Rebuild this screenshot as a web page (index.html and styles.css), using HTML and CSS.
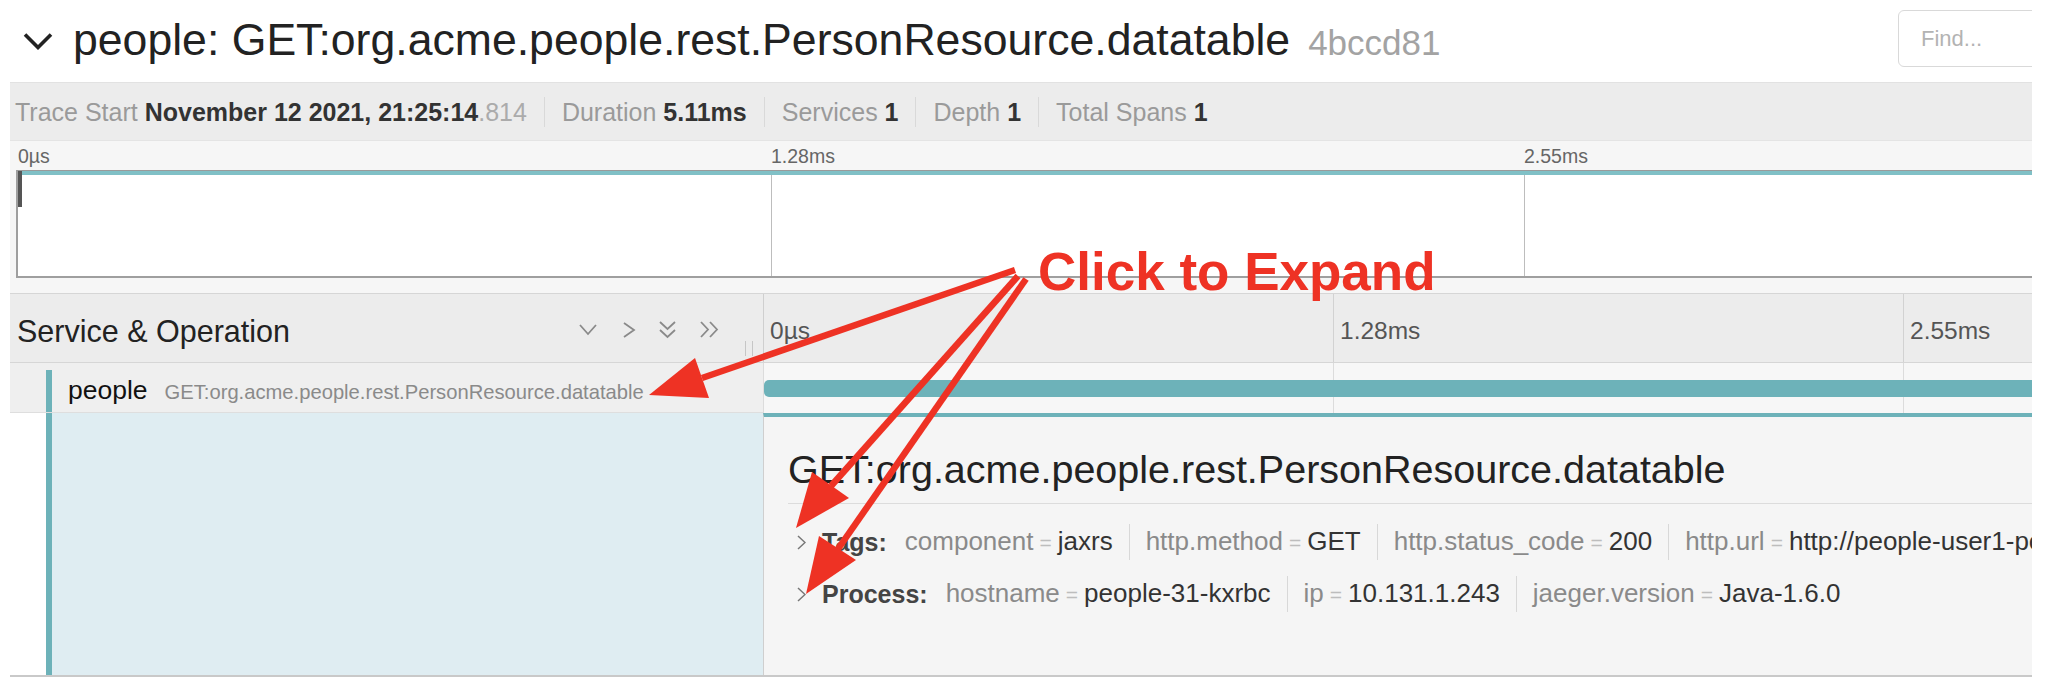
FILE: index.html
```html
<!DOCTYPE html>
<html lang="en">
<head>
<meta charset="utf-8">
<title>Trace view</title>
<link rel="stylesheet" href="styles.css">
</head>
<body>
<div class="app">
  <header class="trace-title">
    <svg class="title-chevron" viewBox="0 0 30 18" width="30" height="18"><polyline points="2,2.5 15,15.5 28,2.5" fill="none" stroke="#222" stroke-width="3.6"/></svg>
    <h1 class="title">people: GET:org.acme.people.rest.PersonResource.datatable<span class="trace-id">4bccd81</span></h1>
    <input class="find" type="text" placeholder="Find...">
  </header>

  <div class="summary">
    <div class="summary-item">Trace Start <b>November 12 2021, 21:25:14</b><span class="ms">.814</span></div>
    <div class="summary-item">Duration <b>5.11ms</b></div>
    <div class="summary-item">Services <b>1</b></div>
    <div class="summary-item">Depth <b>1</b></div>
    <div class="summary-item">Total Spans <b>1</b></div>
  </div>

  <section class="minimap">
    <div class="ruler">
      <span>0µs</span>
      <span>1.28ms</span>
      <span>2.55ms</span>
    </div>
    <div class="canvas">
      <div class="canvas-bar"></div>
      <div class="canvas-cells"><div></div><div></div><div></div></div>
      <div class="handle"></div>
    </div>
  </section>

  <section class="timeline">
    <div class="tl-header">
      <div class="tl-left">
        <h3 class="tl-title">Service &amp; Operation</h3>
        <div class="tl-icons">
          <svg width="18" height="13" viewBox="0 0 18 13"><polyline points="1,2 9,11 17,2"/></svg>
          <svg width="14" height="16" viewBox="0 0 14 16"><polyline points="2,1 12,8 2,15"/></svg>
          <svg width="19" height="20" viewBox="0 0 19 20"><polyline points="2,2 9.5,9 17,2"/><polyline points="2,10 9.5,17 17,10"/></svg>
          <svg width="21" height="17" viewBox="0 0 21 17"><polyline points="2,1 9,8.5 2,16"/><polyline points="11,1 18,8.5 11,16"/></svg>
        </div>
        <div class="resizer"></div>
      </div>
      <div class="tl-right">
        <span class="tick">0µs</span>
        <span class="tick">1.28ms</span>
        <span class="tick">2.55ms</span>
      </div>
    </div>

    <div class="span-row">
      <div class="span-name-col">
        <div class="span-indent"><span class="svc">people</span><span class="op">GET:org.acme.people.rest.PersonResource.datatable</span></div>
      </div>
      <div class="span-bar-col">
        <div class="span-bar"></div>
      </div>
    </div>

    <div class="detail-row">
      <div class="detail-left"><div class="detail-indent"></div></div>
      <div class="detail-panel">
        <h2 class="detail-title">GET:org.acme.people.rest.PersonResource.datatable</h2>
        <div class="kv-row">
          <svg class="kv-chevron" width="9" height="15" viewBox="0 0 9 15"><polyline points="1,1 8,7.5 1,14"/></svg>
          <strong class="kv-label">Tags:</strong>
          <span class="kv"><span class="k">component</span><span class="eq">=</span><span class="v">jaxrs</span></span>
          <span class="kv"><span class="k">http.method</span><span class="eq">=</span><span class="v">GET</span></span>
          <span class="kv"><span class="k">http.status_code</span><span class="eq">=</span><span class="v">200</span></span>
          <span class="kv"><span class="k">http.url</span><span class="eq">=</span><span class="v">http://people-user1-people.apps.cluster.example.com/person/datatable</span></span>
        </div>
        <div class="kv-row">
          <svg class="kv-chevron" width="9" height="15" viewBox="0 0 9 15"><polyline points="1,1 8,7.5 1,14"/></svg>
          <strong class="kv-label">Process:</strong>
          <span class="kv"><span class="k">hostname</span><span class="eq">=</span><span class="v">people-31-kxrbc</span></span>
          <span class="kv"><span class="k">ip</span><span class="eq">=</span><span class="v">10.131.1.243</span></span>
          <span class="kv"><span class="k">jaeger.version</span><span class="eq">=</span><span class="v">Java-1.6.0</span></span>
        </div>
      </div>
    </div>
  </section>
</div>

<svg class="annotations" width="2046" height="682" viewBox="0 0 2046 682">
  <g stroke="#ee3224" stroke-width="6.5" fill="none">
    <line x1="1015" y1="270" x2="702" y2="378"/>
    <line x1="1018" y1="276" x2="831" y2="486"/>
    <line x1="1026" y1="279" x2="838" y2="549"/>
  </g>
  <g fill="#ee3224">
    <polygon points="649,395 695,358 709,398"/>
    <polygon points="796,528 812,472 849,498"/>
    <polygon points="806,594 819,536 856,560"/>
  </g>
</svg>
<div class="callout">Click to Expand</div>
</body>
</html>
```

FILE: styles.css
```css
* { box-sizing: border-box; }

html, body {
  margin: 0;
  padding: 0;
  background: #fff;
}

body {
  position: relative;
  width: 2046px;
  height: 682px;
  overflow: hidden;
  font-family: "Liberation Sans", Arial, Helvetica, sans-serif;
  color: #333;
}

.app {
  margin-left: 10px;
  width: 2022px;
  overflow: hidden;
}

/* ---------- title bar ---------- */
.trace-title {
  display: flex;
  align-items: center;
  height: 82px;
}

.title-chevron {
  flex: none;
  margin-left: 13px;
}

.title {
  margin: 0 0 0 20px;
  font-size: 44.6px;
  line-height: 52px;
  font-weight: normal;
  color: #222;
  white-space: nowrap;
}

.trace-id {
  margin-left: 18px;
  font-size: 35px;
  color: #a3a3a3;
}

.find {
  flex: none;
  margin-left: auto;
  margin-right: -30px;
  margin-bottom: 5px;
  width: 164px;
  height: 57px;
  padding: 0 0 0 22px;
  border: 1px solid #d9d9d9;
  border-radius: 6px;
  background: #fff;
  font: 22px "Liberation Sans", Arial, sans-serif;
  color: #333;
}

.find::placeholder { color: #b3b3b3; }

/* ---------- summary bar ---------- */
.summary {
  display: flex;
  align-items: center;
  height: 58px;
  padding-left: 5px;
  background: #ececec;
  border-top: 1px solid #e2e2e2;
  font-size: 25px;
  color: #9a9a9a;
  white-space: nowrap;
}

.summary-item {
  line-height: 30px;
}

.summary-item + .summary-item {
  margin-left: 17px;
  padding-left: 17px;
  border-left: 1px solid #d9d9d9;
}

.summary b { color: #333; }
.summary .ms { color: #ababab; }

/* ---------- minimap ---------- */
.minimap {
  padding: 0 0 15px 6px;
  background: #f6f6f6;
  border-top: 1px solid #e4e4e4;
}

.ruler {
  display: flex;
  align-items: flex-end;
  height: 29px;
  padding: 0 0 3px 2px;
  font-size: 19.5px;
  color: #666;
}

.ruler span {
  flex: none;
  width: 753px;
  line-height: 22px;
}

.canvas {
  position: relative;
  display: flex;
  flex-direction: column;
  height: 108px;
  background: #fff;
  border-top: 1px solid #9a9a9a;
  border-left: 2px solid #9f9f9f;
  border-bottom: 2px solid #9f9f9f;
}

.canvas-bar {
  height: 4px;
  background: #80c0c6;
}

.canvas-cells {
  flex: 1;
  display: flex;
}

.canvas-cells div {
  flex: none;
  width: 753px;
  border-left: 1px solid #bdbdbd;
}

.canvas-cells div:first-child { border-left: none; }

.handle {
  position: absolute;
  left: 0;
  top: 0;
  width: 4px;
  height: 36px;
  background: #555;
}

/* ---------- timeline ---------- */
.tl-header {
  display: flex;
  height: 70px;
  background: #ececec;
  border-top: 1px solid #d6d6d6;
  border-bottom: 1px solid #d6d6d6;
}

.tl-left {
  flex: none;
  display: flex;
  align-items: center;
  width: 753px;
  padding: 5px 10px 0 7px;
}

.tl-title {
  margin: 0;
  font-size: 30.5px;
  line-height: 34px;
  font-weight: normal;
  color: #222;
}

.tl-icons {
  display: flex;
  align-items: center;
  margin-left: auto;
  margin-top: -2px;
}

.tl-icons svg {
  fill: none;
  stroke: #8a8a8a;
  stroke-width: 1.8;
}

.tl-icons svg + svg { margin-left: 22px; }
.tl-icons svg:nth-child(2) { margin-left: 25px; }

.resizer {
  align-self: flex-end;
  flex: none;
  width: 8px;
  height: 15px;
  margin: 0 0 6px 25px;
  border-left: 1px solid #c6c6c6;
  border-right: 1px solid #c6c6c6;
}

.tl-right {
  flex: 1;
  display: flex;
  align-items: center;
  padding-top: 5px;
  border-left: 1px solid #cfcfcf;
  background: repeating-linear-gradient(to right, transparent 0, transparent 569px, #d2d2d2 569px, #d2d2d2 570px);
  font-size: 24.5px;
  color: #555;
  white-space: nowrap;
}

.tick {
  flex: none;
  width: 570px;
  padding-left: 6px;
}

.span-row {
  display: flex;
  height: 50px;
}

.span-name-col {
  flex: none;
  width: 753px;
  padding-top: 7px;
  background: #efefef;
  border-bottom: 1px solid #dedede;
}

.span-indent {
  height: 100%;
  margin-left: 36px;
  padding-left: 16px;
  border-left: 6px solid #6db2b9;
  line-height: 40px;
  white-space: nowrap;
}

.svc {
  font-size: 26.5px;
  color: #111;
}

.op {
  margin-left: 17px;
  font-size: 20.2px;
  color: #8a8a8a;
}

.span-bar-col {
  flex: 1;
  padding-top: 17px;
  border-left: 1px solid #dcdcdc;
  background: #f7f7f7 repeating-linear-gradient(to right, transparent 0, transparent 569px, #dcdcdc 569px, #dcdcdc 570px);
}

.span-bar {
  height: 17px;
  background: #6db2b9;
  border-radius: 5px 0 0 5px;
}

.detail-row {
  display: flex;
  height: 264px;
  border-bottom: 2px solid #c9c9c9;
}

.detail-left {
  flex: none;
  width: 753px;
  background: #fff;
}

.detail-indent {
  height: 100%;
  margin-left: 36px;
  border-left: 6px solid #6db2b9;
  background: #dfedf2;
}

.detail-panel {
  flex: 1;
  overflow: hidden;
  padding: 30px 0 0 24px;
  background: #f5f5f5;
  border-top: 4px solid #6db2b9;
  border-left: 1px solid #cfcfcf;
}

.detail-title {
  margin: 0;
  padding-bottom: 12px;
  border-bottom: 1px solid #dcdcdc;
  font-size: 39.5px;
  line-height: 44px;
  font-weight: normal;
  color: #222;
  white-space: nowrap;
}

.kv-row {
  display: flex;
  align-items: center;
  height: 36px;
  margin-top: 16px;
  white-space: nowrap;
  font-size: 26px;
}

.detail-title + .kv-row { margin-top: 20px; }

.kv-chevron {
  flex: none;
  margin-left: 9px;
  fill: none;
  stroke: #777;
  stroke-width: 1.5;
}

.kv-label {
  margin: 0 18px 0 16px;
  font-size: 25px;
  color: #444;
}

.kv {
  flex: none;
  padding: 0 16px;
  line-height: 34px;
  border-left: 1px solid #d8d8d8;
}

.kv-label + .kv {
  padding-left: 0;
  border-left: none;
}

.k { color: #8a8a8a; }
.eq { margin: 0 6px; font-size: 21px; color: #bdbdbd; }
.v { color: #333; }

/* ---------- annotation overlay ---------- */
.annotations {
  position: absolute;
  left: 0;
  top: 0;
  pointer-events: none;
}

.callout {
  position: absolute;
  left: 1038px;
  top: 245px;
  font-size: 53px;
  line-height: 53px;
  font-weight: bold;
  color: #ee3224;
  white-space: nowrap;
  pointer-events: none;
}
```
